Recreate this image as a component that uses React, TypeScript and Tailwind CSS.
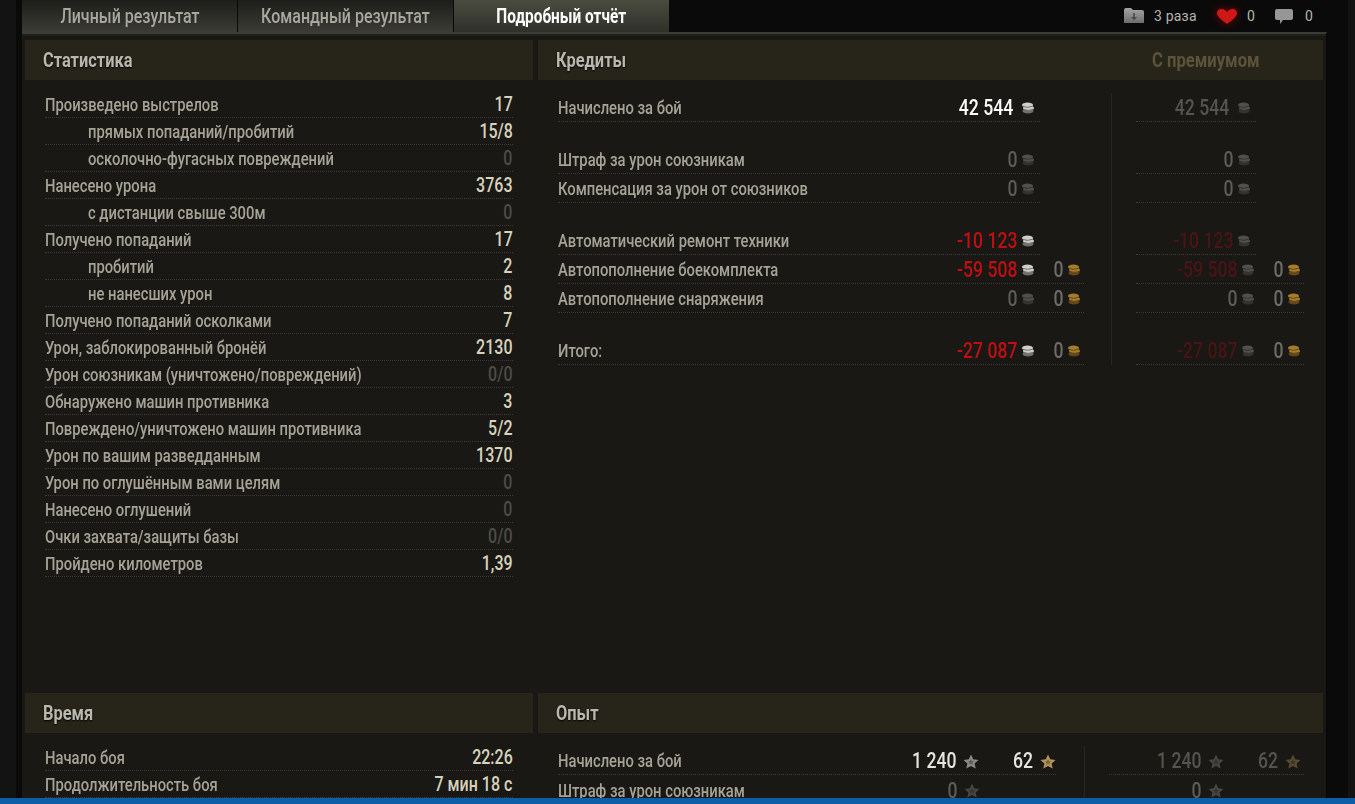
import type { ReactNode } from "react";

type Stat = { label: string; value: string; sub?: boolean; dim?: boolean };

const stats: Stat[] = [
  { label: "Произведено выстрелов", value: "17" },
  { label: "прямых попаданий/пробитий", value: "15/8", sub: true },
  { label: "осколочно-фугасных повреждений", value: "0", sub: true, dim: true },
  { label: "Нанесено урона", value: "3763" },
  { label: "с дистанции свыше 300м", value: "0", sub: true, dim: true },
  { label: "Получено попаданий", value: "17" },
  { label: "пробитий", value: "2", sub: true },
  { label: "не нанесших урон", value: "8", sub: true },
  { label: "Получено попаданий осколками", value: "7" },
  { label: "Урон, заблокированный бронёй", value: "2130" },
  { label: "Урон союзникам (уничтожено/повреждений)", value: "0/0", dim: true },
  { label: "Обнаружено машин противника", value: "3" },
  { label: "Повреждено/уничтожено машин противника", value: "5/2" },
  { label: "Урон по вашим разведданным", value: "1370" },
  { label: "Урон по оглушённым вами целям", value: "0", dim: true },
  { label: "Нанесено оглушений", value: "0", dim: true },
  { label: "Очки захвата/защиты базы", value: "0/0", dim: true },
  { label: "Пройдено километров", value: "1,39" },
];

// the game font is a condensed DIN, so text gets squeezed horizontally
function Label({ children, className = "" }: { children: ReactNode; className?: string }) {
  return <span className={`inline-block origin-left scale-x-[0.82] whitespace-nowrap text-[18px] leading-none font-medium text-[#a5a396] ${className}`}>{children}</span>;
}

function Num({ children, className = "", small }: { children: ReactNode; className?: string; small?: boolean }) {
  return <span className={`inline-block origin-right scale-x-[0.8] whitespace-nowrap leading-none font-medium ${small ? "text-[20px]" : "text-[22px]"} ${className}`}>{children}</span>;
}

function Coin({ gold, dim }: { gold?: boolean; dim?: boolean }) {
  const top = gold ? "#a67c2a" : "#cfcfca";
  const low = gold ? "#63471a" : "#70706c";
  return (
    <svg width="14" height="12" viewBox="0 0 14 12" className={dim ? "opacity-30" : ""}>
      <ellipse cx="7" cy="9" rx="5.500" ry="2.500" fill={low} />
      <ellipse cx="7.500" cy="6" rx="5.500" ry="2.500" fill={top} />
      <ellipse cx="6.500" cy="3" rx="5.500" ry="2.500" fill={top} />
      <path d="M2 4.400q4.500 2 9 0M2.500 7.400q4.500 2 10 0" stroke={low} fill="none" />
    </svg>
  );
}

function Star({ gold, dim }: { gold?: boolean; dim?: boolean }) {
  return (
    <svg width="16" height="15" viewBox="0 0 16 15" className={dim ? "opacity-40" : ""}>
      <path d="M8 .5l2.200 4.800 5.300.6-3.900 3.500 1.100 5.200L8 12l-4.700 2.600 1.100-5.200L.5 5.900l5.300-.6z" fill={gold ? "#b3955a" : "#8a8a86"} />
      <path d="M8 5l1 2 2 .3-1.500 1.400.4 2L8 9.700l-1.900 1 .4-2L5 7.300 7 7z" fill={gold ? "#7a6438" : "#5e5e5a"} />
    </svg>
  );
}

function Header({ title, right }: { title: string; right?: string }) {
  return (
    <div className="flex h-10 items-center justify-between bg-[#27241a] pl-[18px] pr-[63px]">
      <span className="inline-block origin-left scale-x-[0.82] whitespace-nowrap text-[20px] font-bold text-[#b9b8ac] [text-shadow:0_1px_2px_#000]">{title}</span>
      {right && <span className="inline-block origin-right scale-x-[0.83] whitespace-nowrap text-[20px] font-bold text-[#5c533a]">{right}</span>}
    </div>
  );
}

function Tab({ children, active }: { children: ReactNode; active?: boolean }) {
  return (
    <div className={`flex h-8 w-[215px] items-center justify-center bg-gradient-to-b ${active ? "from-[#4b4c40] to-[#2f3029] text-white" : "from-[#1d1e1a] to-[#3b3c35] text-[#a8a89e]"}`}>
      <span className={`inline-block whitespace-nowrap text-[20px] ${active ? "scale-x-[0.77] font-bold" : "scale-x-[0.8] font-medium"}`}>{children}</span>
    </div>
  );
}

function StatRow({ label, value, sub, dim }: Stat) {
  return (
    <div className="flex h-[27px] items-center justify-between border-b border-dotted border-[#3a3a36] pt-[2px]">
      <Label className={sub ? "ml-[43px]" : ""}>{label}</Label>
      <Num small className={`-translate-y-px ${dim ? "text-[#4c4c48]" : "text-[#d6d2bc]"}`}>{value}</Num>
    </div>
  );
}

function CreditRow({ label, value, tone, gold, mt, w }: { label?: string; value: string; tone: string; gold?: boolean; mt?: string; w: string }) {
  const dim = !tone.includes("white") && !tone.includes("c00");
  return (
    <div className={`flex h-[29px] items-center border-b border-dotted border-[#3a3a36] pt-[2px] ${mt ?? ""} ${w}`}>
      {label && <Label className="flex-1">{label}</Label>}
      <span className={`flex items-center gap-[3px] ${label ? "" : "flex-1 justify-end"} mr-[5px]`}>
        <Num className={tone}>{value}</Num>
        <Coin dim={dim} />
      </span>
      {gold && (
        <span className="flex w-[44px] items-center justify-end gap-[3px] pr-[3px]">
          <Num className="text-[#6c6c68]">0</Num>
          <Coin gold />
        </span>
      )}
    </div>
  );
}

const credits = [
  { label: "Начислено за бой", value: "42 544", tone: "text-white pr-[6px]", prem: "42 544", premTone: "text-[#55554f] pr-[6px]" },
  { label: "Штраф за урон союзникам", value: "0", tone: "text-[#5c5c58]", prem: "0", premTone: "text-[#5c5c58]", mt: "mt-[23px]" },
  { label: "Компенсация за урон от союзников", value: "0", tone: "text-[#5c5c58]", prem: "0", premTone: "text-[#5c5c58]" },
  { label: "Автоматический ремонт техники", value: "-10 123", tone: "text-[#c00f13]", prem: "-10 123", premTone: "text-[#4a1416]", mt: "mt-[23px]" },
  { label: "Автопополнение боекомплекта", value: "-59 508", tone: "text-[#c00f13]", prem: "-59 508", premTone: "text-[#4a1416]", gold: true },
  { label: "Автопополнение снаряжения", value: "0", tone: "text-[#5c5c58]", prem: "0", premTone: "text-[#5c5c58]", gold: true },
  { label: "Итого:", value: "-27 087", tone: "text-[#c00f13]", prem: "-27 087", premTone: "text-[#4a1416]", gold: true, mt: "mt-[23px]" },
];

export default function App() {
  return (
    <div className="flex h-[804px] w-[1355px] flex-col overflow-hidden bg-[#131313] font-['Roboto',sans-serif]">
      <div className="ml-[16px] h-[798px] w-[1332px] overflow-hidden bg-[#0a0a0a] pl-[6px] pr-[21px]">
        {/* Tabs */}
        <div className="flex h-8 items-center justify-between">
          <div className="flex h-8 gap-px">
            <Tab>Личный результат</Tab>
            <Tab>Командный результат</Tab>
            <Tab active>Подробный отчёт</Tab>
          </div>
          <div className="flex items-center pr-[13px] text-[14px] tracking-[0.2px] text-[#b5b5b0]">
            <svg width="22" height="18" viewBox="0 0 22 18">
              <defs>
                <linearGradient id="folder" x1="0" y1="0" x2="0" y2="1">
                  <stop offset="0" stopColor="#a3a6a2" />
                  <stop offset="1" stopColor="#6b6e6b" />
                </linearGradient>
              </defs>
              <path d="M1 3q0-2 2-2h5l2 2h9q2 0 2 2v11H1z" fill="url(#folder)" />
              <path d="M10.200 6h1.600v4h2.200L11 13.500 8 10h2.200z" fill="#4c4e4c" />
            </svg>
            <span className="ml-[9px] w-[42px] whitespace-nowrap">3 раза</span>
            <svg width="22" height="17" viewBox="0 0 22 17" className="ml-[20px] drop-shadow-[0_0_4px_#7a0000]">
              <path d="M11 16C6 12 1 9 1 5c0-3 2.500-4 4.500-4C8 1 10 2.500 11 4c1-1.500 3-3 5.500-3C18.500 1 21 2 21 5c0 4-5 7-10 11z" fill="#cf1717" />
            </svg>
            <span className="ml-[9px] w-[9px]">0</span>
            <svg width="20" height="17" viewBox="0 0 20 17" className="ml-[18px]">
              <path d="M3 1h14q2 0 2 2v7q0 2-2 2H9l-3 4v-4H3q-2 0-2-2V3q0-2 2-2z" fill="#959795" />
            </svg>
            <span className="ml-[11px] w-[9px]">0</span>
          </div>
        </div>

        {/* Frame */}
        <div className="h-[766px] overflow-hidden border-t-[2px] border-r border-[#3a3c35] border-r-[#050505] bg-[#191815]">
          <div className="h-[2px] bg-[#20211c]" />
          <div className="flex gap-[5px] px-[3px] pt-[4px]">
            <div className="w-[508px]">
              <Header title="Статистика" />
              <div className="h-[613px] px-[20px] pt-[11px]">
                {stats.map((s) => (
                  <StatRow key={s.label} {...s} />
                ))}
              </div>
              <Header title="Время" />
              <div className="px-[20px] pt-[11px]">
                <StatRow label="Начало боя" value="22:26" />
                <StatRow label="Продолжительность боя" value="7 мин 18 с" />
              </div>
            </div>

            <div className="w-[786px]">
              <Header title="Кредиты" right="С премиумом" />
              <div className="flex h-[613px] items-start pt-[13px]">
                <div className="h-[272px] w-[574px] border-r border-[#262623] pl-[20px]">
                  {credits.map((c) => (
                    <CreditRow key={c.label} label={c.label} value={c.value} tone={c.tone} gold={c.gold} mt={c.mt} w={c.gold ? "w-[526px]" : "w-[482px]"} />
                  ))}
                </div>
                <div className="pl-[24px]">
                  {credits.map((c) => (
                    <CreditRow key={c.label} value={c.prem} tone={c.premTone} gold={c.gold} mt={c.mt} w={c.gold ? "w-[168px]" : "w-[120px]"} />
                  ))}
                </div>
              </div>
              <Header title="Опыт" />
              <div className="flex items-start pt-[13px]">
                <div className="h-[60px] w-[547px] border-r border-[#262623] pl-[20px]">
                  <div className="flex h-[29px] w-[498px] items-center border-b border-dotted border-[#3a3a36] pt-[2px]">
                    <Label className="flex-1">Начислено за бой</Label>
                    <span className="flex items-center gap-[6px]"><Num className="text-[#e6e6e0]">1 240</Num><Star /></span>
                    <span className="flex w-[77px] items-center justify-end gap-[7px]"><Num className="text-[#e6e6e0]">62</Num><Star gold /></span>
                  </div>
                  <div className="flex h-[29px] w-[422px] items-center pt-[2px]">
                    <Label className="flex-1">Штраф за урон союзникам</Label>
                    <span className="flex items-center gap-[6px]"><Num className="text-[#5c5c58]">0</Num><Star dim /></span>
                  </div>
                </div>
                <div className="pl-[24px]">
                  <div className="flex h-[29px] w-[195px] items-center justify-end border-b border-dotted border-[#3a3a36] pr-[3px] pt-[2px]">
                    <span className="flex items-center gap-[6px]"><Num className="text-[#55554f]">1 240</Num><Star dim /></span>
                    <span className="flex w-[77px] items-center justify-end gap-[7px]"><Num className="text-[#55554f]">62</Num><Star gold dim /></span>
                  </div>
                  <div className="flex h-[29px] w-[115px] items-center justify-end pt-[2px]">
                    <span className="flex items-center gap-[6px]"><Num className="text-[#5c5c58]">0</Num><Star dim /></span>
                  </div>
                </div>
              </div>
            </div>
          </div>
        </div>
      </div>
      <div className="h-[6px] bg-[#0d5ea6]" />
    </div>
  );
}
